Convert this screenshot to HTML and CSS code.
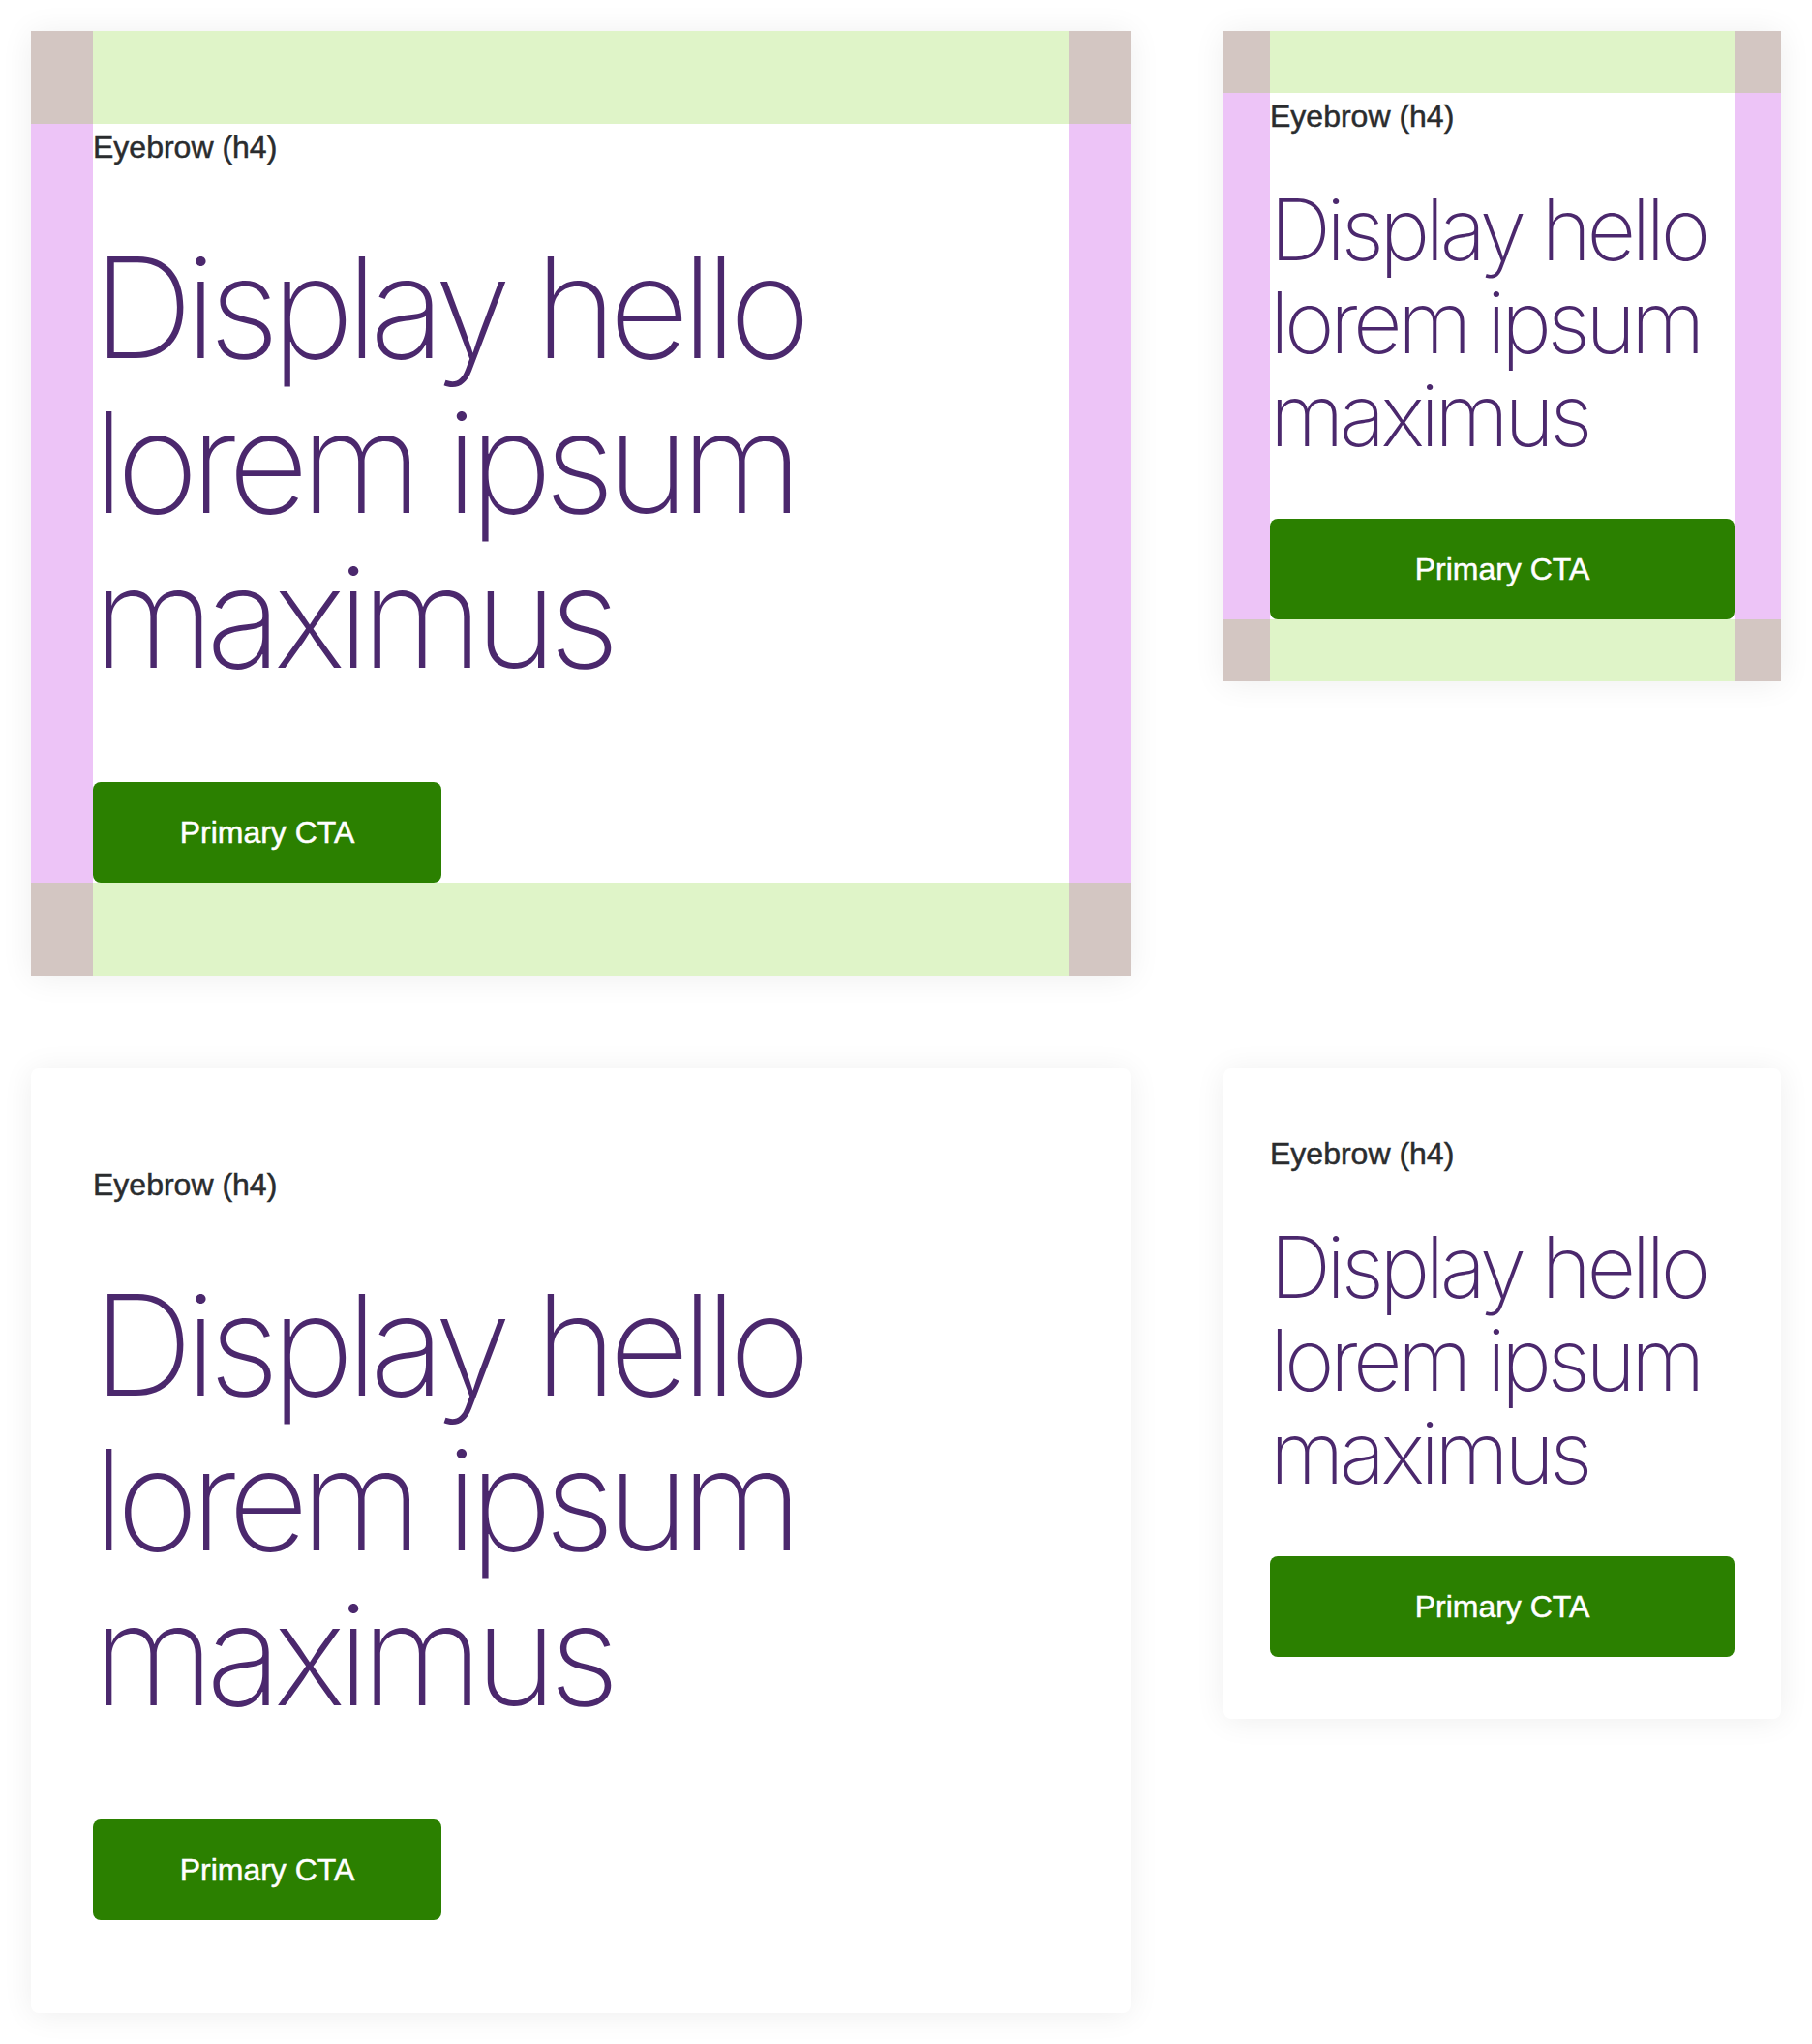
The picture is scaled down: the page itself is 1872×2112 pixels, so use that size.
FILE: index.html
```html
<!DOCTYPE html>
<html lang="en">
<head>
<meta charset="utf-8">
<title>Cards</title>
<link rel="stylesheet" href="styles.css">
</head>
<body>
<main class="grid">
  <section class="card card-lg annotated">
    <div class="corner"></div><div class="pad-v"></div><div class="corner"></div>
    <div class="pad-h"></div>
    <div class="content">
      <h4 class="eyebrow">Eyebrow (h4)</h4>
      <h1 class="display">Display hello<br>lorem ipsum<br>maximus</h1>
      <button class="cta">Primary CTA</button>
    </div>
    <div class="pad-h"></div>
    <div class="corner"></div><div class="pad-v"></div><div class="corner"></div>
  </section>

  <section class="card card-sm annotated">
    <div class="corner"></div><div class="pad-v"></div><div class="corner"></div>
    <div class="pad-h"></div>
    <div class="content">
      <h4 class="eyebrow">Eyebrow (h4)</h4>
      <h1 class="display">Display hello<br>lorem ipsum<br>maximus</h1>
      <button class="cta">Primary CTA</button>
    </div>
    <div class="pad-h"></div>
    <div class="corner"></div><div class="pad-v"></div><div class="corner"></div>
  </section>

  <section class="card card-lg plain">
    <div class="content">
      <h4 class="eyebrow">Eyebrow (h4)</h4>
      <h1 class="display">Display hello<br>lorem ipsum<br>maximus</h1>
      <button class="cta">Primary CTA</button>
    </div>
  </section>

  <section class="card card-sm plain">
    <div class="content">
      <h4 class="eyebrow">Eyebrow (h4)</h4>
      <h1 class="display">Display hello<br>lorem ipsum<br>maximus</h1>
      <button class="cta">Primary CTA</button>
    </div>
  </section>
</main>
</body>
</html>
```

FILE: styles.css
```css
html, body {
  margin: 0;
  padding: 0;
  background: #ffffff;
}

body {
  padding: 32px;
  font-family: "Liberation Sans", Arial, sans-serif;
}

.grid {
  display: grid;
  grid-template-columns: 1136px 576px;
  column-gap: 96px;
  row-gap: 96px;
  align-items: start;
}

.card {
  background: #ffffff;
  box-shadow: 0 2px 32px rgba(0, 0, 0, 0.07);
}

.plain {
  border-radius: 8px;
}

.card-lg.plain {
  padding: 96px 64px;
}

.card-sm.plain {
  padding: 64px 48px;
}

.annotated {
  display: grid;
}

.card-lg.annotated {
  grid-template-columns: 64px 1fr 64px;
  grid-template-rows: 96px auto 96px;
}

.card-sm.annotated {
  grid-template-columns: 48px 1fr 48px;
  grid-template-rows: 64px auto 64px;
}

.corner {
  background: #d3c6c2;
}

.pad-v {
  background: #dff4c8;
}

.pad-h {
  background: #edc4f7;
}

.content {
  display: flex;
  flex-direction: column;
  align-items: flex-start;
}

.eyebrow {
  margin: 0;
  font-family: "Liberation Sans", Arial, sans-serif;
  font-size: 32px;
  line-height: 48px;
  font-weight: 400;
  color: #2a2c2e;
  -webkit-text-stroke: 0.5px #2a2c2e;
}

.display {
  margin: 0;
  font-family: Inter, Roboto, "Liberation Sans", sans-serif;
  font-weight: 200;
  color: #4b286d;
}

.card-lg .display {
  font-size: 144px;
  line-height: 160px;
  letter-spacing: -0.055em;
  margin-top: 62px;
  margin-bottom: 90px;
}

.card-sm .display {
  font-size: 88px;
  line-height: 96px;
  letter-spacing: -0.053em;
  margin-top: 45px;
  margin-bottom: 59px;
}

.cta {
  margin: 0;
  border: 0;
  border-radius: 8px;
  background: #2b8000;
  color: #ffffff;
  font-family: "Liberation Sans", Arial, sans-serif;
  font-size: 32px;
  line-height: 104px;
  height: 104px;
  padding: 0;
  text-align: center;
  -webkit-text-stroke: 0.5px #ffffff;
}

.card-lg .cta {
  width: 360px;
}

.card-sm .cta {
  width: 100%;
  align-self: stretch;
}
```
